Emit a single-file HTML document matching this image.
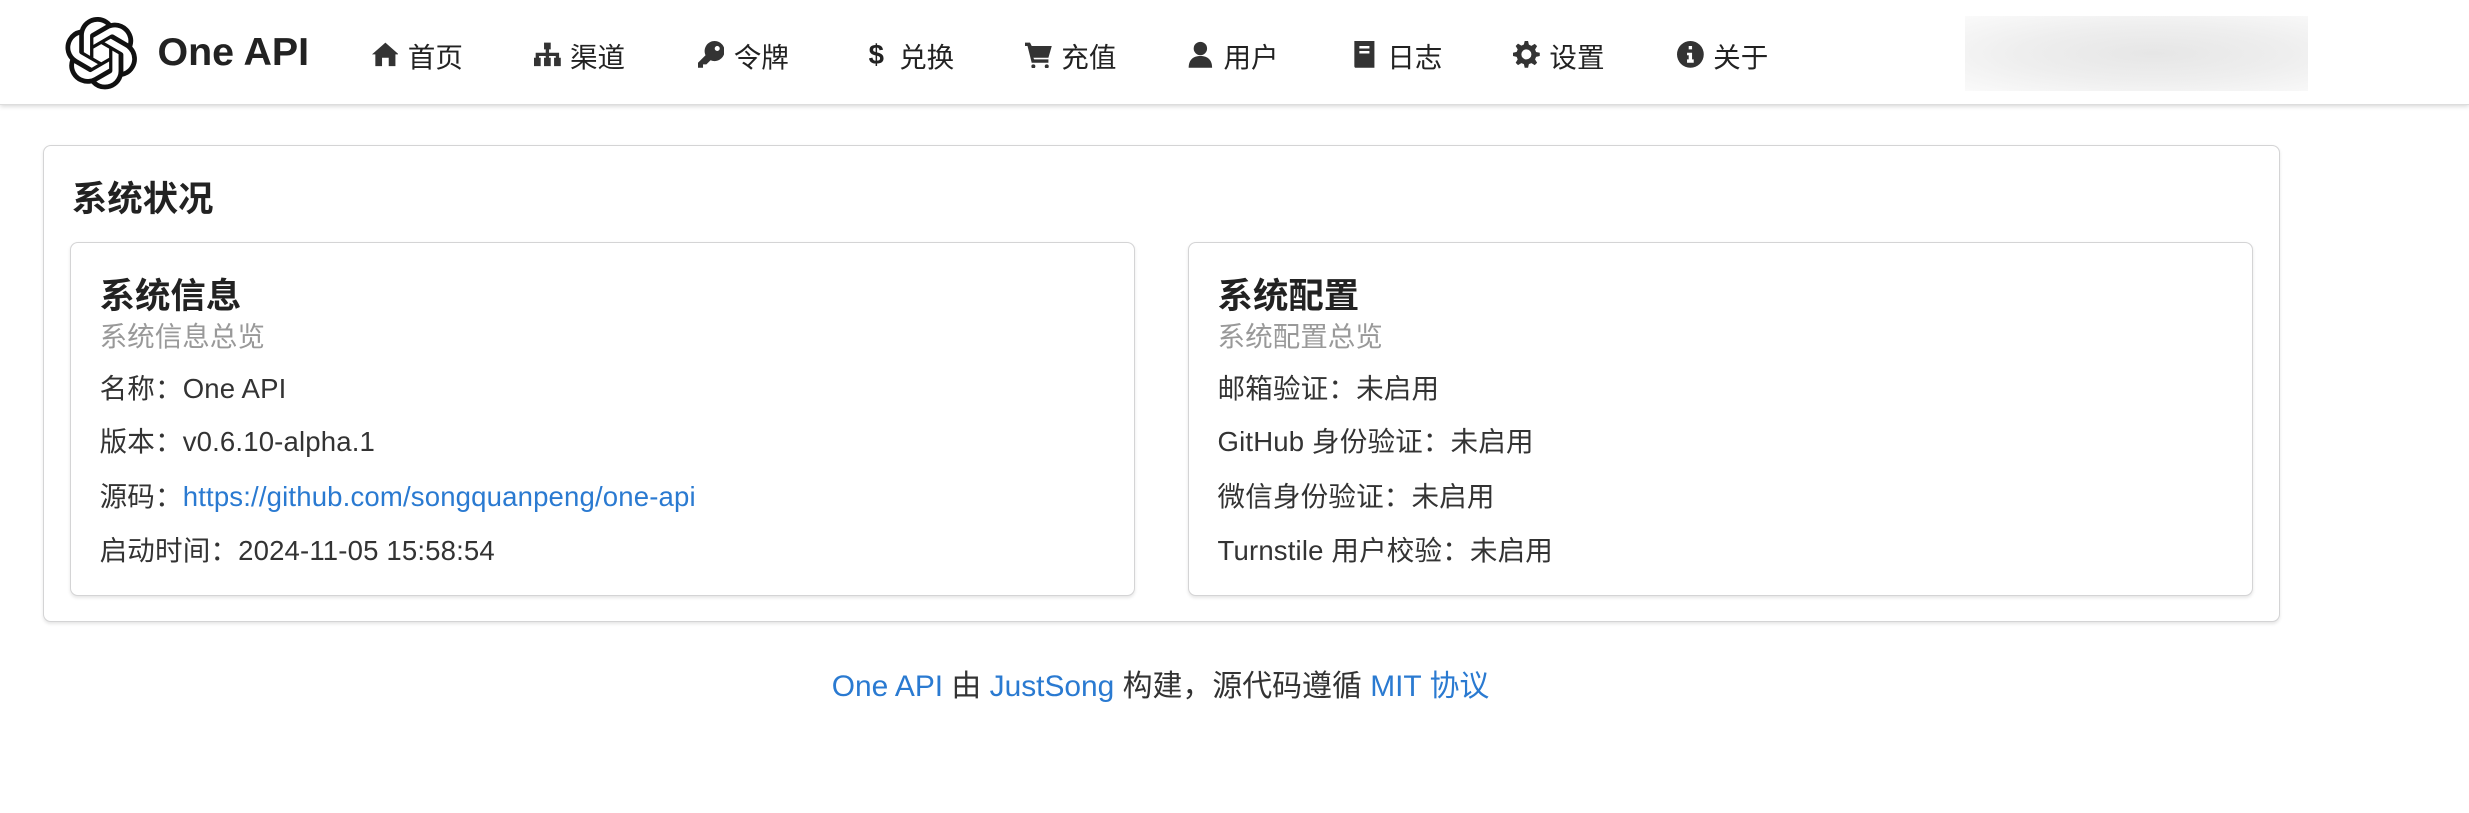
<!DOCTYPE html>
<html><head><meta charset="utf-8"><style>
*{box-sizing:border-box;margin:0;padding:0}
html,body{width:2469px;height:813px;overflow:hidden;background:#fff}
#w{zoom:1.5746;width:1568px;height:516px;position:relative;font-family:"Liberation Sans","Noto Sans CJK SC",sans-serif;color:#222}
.hd{position:absolute;left:0;top:0;width:1568px;height:67px;background:#fff;box-shadow:0 1px 3px rgba(0,0,0,.18);border-bottom:1px solid #ddd}
.ab{position:absolute;white-space:nowrap}
.nav{position:absolute;top:22px;font-size:17.5px;display:flex;align-items:center;gap:6px;color:#222}
.nav svg{width:17px;height:17px;fill:#333}
.card{position:absolute;background:#fff;border:1px solid #d4d4d5;border-radius:5px;box-shadow:0 1px 2px rgba(0,0,0,.1)}
.t{font-weight:bold;font-size:22.5px;color:#222}
.s{font-size:17.5px;color:#999}
.l{font-size:17.5px;color:#333;position:absolute;left:18px;letter-spacing:0.1px}
a{color:#2a7ad1;text-decoration:none}
</style></head><body><div id="w">
<div class="hd">
<svg class="ab" style="left:41px;top:11px" width="46" height="46" viewBox="0 0 24 24"><path fill="#111" d="M22.2819 9.8211a5.9847 5.9847 0 0 0-.5157-4.9108 6.0462 6.0462 0 0 0-6.5098-2.9A6.0651 6.0651 0 0 0 4.9807 4.1818a5.9847 5.9847 0 0 0-3.9977 2.9 6.0462 6.0462 0 0 0 .7427 7.0966 5.98 5.98 0 0 0 .511 4.9107 6.051 6.051 0 0 0 6.5146 2.9001A5.9847 5.9847 0 0 0 13.2599 24a6.0557 6.0557 0 0 0 5.7718-4.2058 5.9894 5.9894 0 0 0 3.9977-2.9001 6.0557 6.0557 0 0 0-.7475-7.0729zm-9.022 12.6081a4.4755 4.4755 0 0 1-2.8764-1.0408l.1419-.0804 4.7783-2.7582a.7948.7948 0 0 0 .3927-.6813v-6.7369l2.02 1.1686a.071.071 0 0 1 .038.052v5.5826a4.504 4.504 0 0 1-4.4945 4.4944zm-9.6607-4.1254a4.4708 4.4708 0 0 1-.5346-3.0137l.142.0852 4.783 2.7582a.7712.7712 0 0 0 .7806 0l5.8428-3.3685v2.3324a.0804.0804 0 0 1-.0332.0615L9.74 19.9502a4.4992 4.4992 0 0 1-6.1408-1.6464zM2.3408 7.8956a4.485 4.485 0 0 1 2.3655-1.9728V11.6a.7664.7664 0 0 0 .3879.6765l5.8144 3.3543-2.0201 1.1685a.0757.0757 0 0 1-.071 0l-4.8303-2.7865A4.504 4.504 0 0 1 2.3408 7.872zm16.5963 3.8558L13.1038 8.364 15.1192 7.2a.0757.0757 0 0 1 .071 0l4.8303 2.7913a4.4944 4.4944 0 0 1-.6765 8.1042v-5.6772a.79.79 0 0 0-.407-.667zm2.0107-3.0231l-.142-.0852-4.7735-2.7818a.7759.7759 0 0 0-.7854 0L9.409 9.2297V6.8974a.0662.0662 0 0 1 .0284-.0615l4.8303-2.7866a4.4992 4.4992 0 0 1 6.6802 4.66zM8.3065 12.863l-2.02-1.1638a.0804.0804 0 0 1-.038-.0567V6.0742a4.4992 4.4992 0 0 1 7.3757-3.4537l-.142.0805L8.704 5.459a.7948.7948 0 0 0-.3927.6813zm1.0976-2.3654l2.602-1.4998 2.6069 1.4998v2.9994l-2.5974 1.4997-2.6067-1.4997Z"/></svg>
<div class="ab" style="left:100px;top:19px;font-size:25px;font-weight:bold;color:#222">One API</div>
<div class="nav" style="left:236px"><svg viewBox="0 0 16 16"><path d="M8 1L0 8h2v7h4v-5h4v5h4V8h2z"/></svg>首页</div>
<div class="nav" style="left:339px"><svg viewBox="0 0 16 16"><path d="M6 1h4v4H9v2h6v3h1v5h-4v-5h1V9H9v1h1v5H6v-5h1V9H3v1h1v5H0v-5h1V7h6V5H6z"/></svg>渠道</div>
<div class="nav" style="left:443px"><svg viewBox="0 0 16 16"><path d="M10 0a6 6 0 1 1-2.5 11.5L5 14H3v2H0v-3l4.5-4.5A6 6 0 0 1 10 0zm1.5 3a1.5 1.5 0 1 0 0 3 1.5 1.5 0 0 0 0-3z"/></svg>令牌</div>
<div class="nav" style="left:548px"><span style="font-weight:bold;width:17px;text-align:center">$</span>兑换</div>
<div class="nav" style="left:651px"><svg viewBox="0 0 16 16"><path d="M0 1h3l1 2h12l-2 7H5l.5 1H14v2H4L1.5 3H0zM5 14a1.2 1.2 0 1 0 0 2.4A1.2 1.2 0 0 0 5 14zm8 0a1.2 1.2 0 1 0 0 2.4 1.2 1.2 0 0 0 0-2.4z"/></svg>充值</div>
<div class="nav" style="left:754px"><svg viewBox="0 0 16 16"><circle cx="8" cy="4.5" r="4"/><path d="M1 16c0-5 3-7 7-7s7 2 7 7z"/></svg>用户</div>
<div class="nav" style="left:858px"><svg viewBox="0 0 16 16"><path d="M2 0h12v16H3a1 1 0 0 1-1-1zm3 3v1.5h6V3zm0 3v1.5h6V6z"/></svg>日志</div>
<div class="nav" style="left:961px"><svg viewBox="0 0 16 16"><path d="M7 0h2l.5 2.2 1.5.7 2-1.2 1.4 1.4-1.2 2 .6 1.5L16 7v2l-2.2.5-.6 1.5 1.2 2-1.4 1.4-2-1.2-1.5.6L9 16H7l-.5-2.2-1.5-.6-2 1.2-1.4-1.4 1.2-2-.6-1.5L0 9V7l2.2-.5.6-1.5-1.2-2 1.4-1.4 2 1.2 1.5-.7zm1 5a3 3 0 1 0 0 6 3 3 0 0 0 0-6z"/></svg>设置</div>
<div class="nav" style="left:1065px"><svg viewBox="0 0 16 16"><path d="M8 0a8 8 0 1 1 0 16A8 8 0 0 1 8 0zM7 3v2h2V3zM6 7v1.5h1V11H6v2h4v-2H9V7z"/></svg>关于</div>
<div class="ab" style="left:1248px;top:10px;width:218px;height:48px;background:radial-gradient(ellipse at 55% 50%,#e6e6e6 0%,#eeeeee 50%,#fafafa 100%)"></div>
</div>
<div class="card" style="left:27px;top:92px;width:1421px;height:303px">
<div class="ab t" style="left:18px;top:16px">系统状况</div>
<div class="card" style="left:17px;top:61px;width:676px;height:225px">
<div class="ab t" style="left:18px;top:16px">系统信息</div>
<div class="ab s" style="left:18px;top:45px">系统信息总览</div>
<div class="l" style="top:78px">名称：One API</div>
<div class="l" style="top:112px">版本：v0.6.10-alpha.1</div>
<div class="l" style="top:147px">源码：<a>https://github.com/songquanpeng/one-api</a></div>
<div class="l" style="top:181px">启动时间：2024-11-05 15:58:54</div>
</div>
<div class="card" style="left:727px;top:61px;width:676px;height:225px">
<div class="ab t" style="left:18px;top:16px">系统配置</div>
<div class="ab s" style="left:18px;top:45px">系统配置总览</div>
<div class="l" style="top:78px">邮箱验证：未启用</div>
<div class="l" style="top:112px">GitHub 身份验证：未启用</div>
<div class="l" style="top:147px">微信身份验证：未启用</div>
<div class="l" style="top:181px">Turnstile 用户校验：未启用</div>
</div>
</div>
<div class="ab" style="left:0;width:1474px;text-align:center;top:420px;font-size:19px;color:#333"><a>One API</a> 由 <a>JustSong</a> 构建，源代码遵循 <a>MIT 协议</a></div>
</div></body></html>
